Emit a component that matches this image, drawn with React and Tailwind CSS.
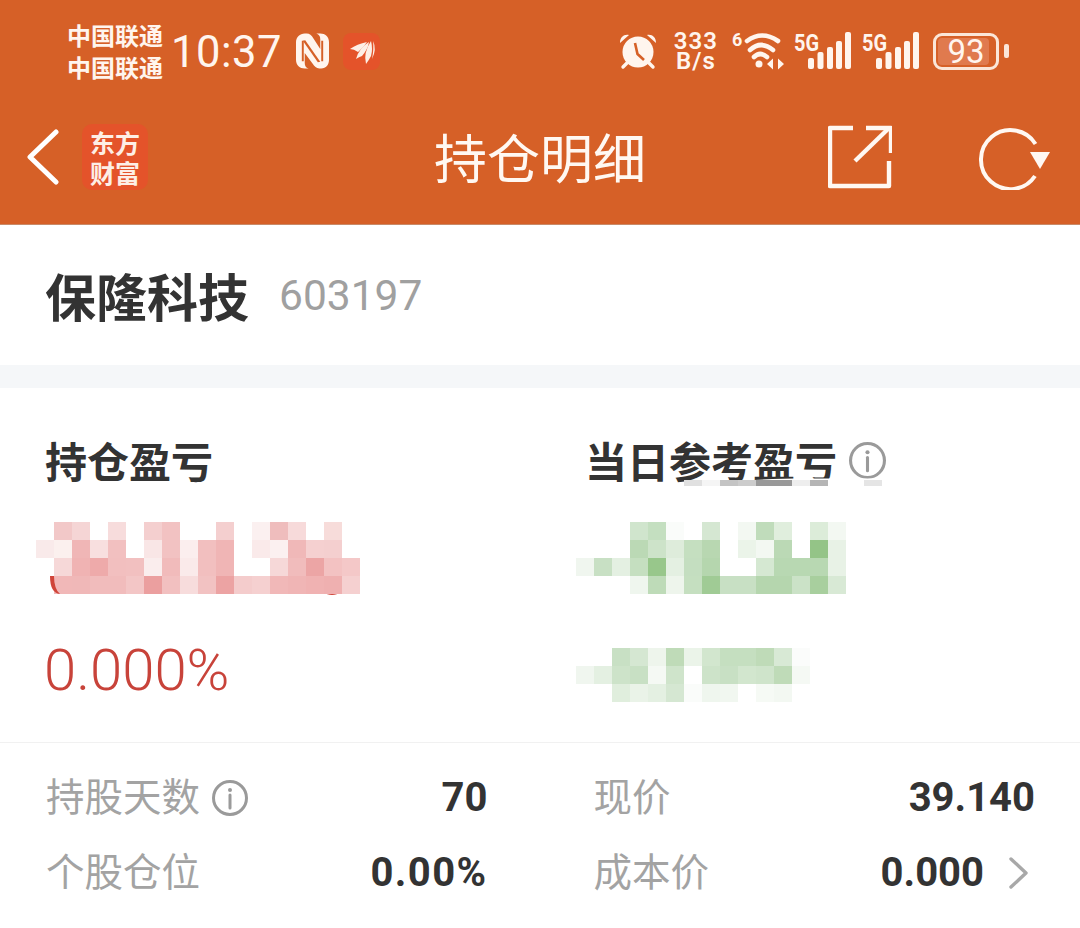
const CJK = { fontFamily: '"Noto Sans CJK SC", sans-serif' };
const ROBOTO = { fontFamily: "Roboto, sans-serif" };

const redRows = [
  ["fff", "f2c8c8", "f5d5d5", "fff", "f7dcdc", "fff", "f4cfcf", "f2c2c2", "fff", "fff", "f4cfcf", "fff", "fbf0f0", "efbdbd", "f7dada", "fff", "f7dcda", "fff"],
  ["f9eaea", "fbf0ee", "f0b6b6", "f8dfdf", "f2c0c0", "fff", "f9e6e6", "f2c2c2", "fbeeee", "f2bfbf", "f0b5b5", "fff", "faeaea", "fbf0f0", "f0b8b8", "f5d0d0", "f4cfcf", "fff"],
  ["fff", "f6d8d8", "f0b3b3", "eeaaaa", "f2bfbf", "f2c0c0", "faeded", "f1bbbb", "faeaea", "f2bfbf", "f0b5b5", "fff", "fff", "f6d8d8", "f1bcbc", "eca5a5", "f3c2c2", "f4c8c8"],
  ["fff", "f1b8b8", "f0b8b8", "f1bcbc", "f1bcbc", "f3c6c6", "eb9f9f", "f2c0c0", "f7dcdc", "f2c2c2", "eca3a3", "f4cccc", "f5d0d0", "f1b8b8", "f0b5b5", "f0b2b2", "efb0b0", "f5d0d0"],
];

const greenRows = [
  ["fff", "fff", "fff", "d0e5cd", "c4dfc0", "fafcfa", "fff", "d5e7d2", "fff", "f3f8f2", "c0dcbb", "e0eedd", "fff", "dcecd9", "f3f8f2"],
  ["fff", "fff", "fff", "bbd9b5", "cde3c9", "deecdb", "c5dfc0", "b8d7b1", "fff", "ebf4e9", "f3f8f2", "bbd9b5", "fff", "94c487", "e8f2e6"],
  ["f0f6ef", "c8e0c4", "e4f0e2", "c5dfc0", "98c78b", "e4f0e2", "c4dec0", "b5d6ae", "fff", "fff", "d5e8d2", "b8d8b2", "b8d8b2", "b8d8b2", "e8f2e6"],
  ["fff", "fff", "fff", "eff6ee", "bedbb8", "eef5ec", "c5dfc0", "a0cb95", "c8e0c4", "c8e0c4", "b5d6ae", "b5d6ae", "cbe2c7", "a8cf9e", "d8e9d5"],
];

const greenRows2 = [
  ["fff", "fff", "c8e0c4", "d5e7d2", "eef5ec", "bfdbb8", "ebf4e9", "d2e6ce", "c5dfc0", "c5dfc0", "bfdbb8", "d8e9d5", "fbfcfb"],
  ["f0f6ef", "e4f0e2", "cde3c9", "c8e0c4", "f5f9f4", "cfe4cb", "fff", "cde3c9", "c8e0c4", "d2e6ce", "cfe4cb", "bfdbb8", "f5f9f4"],
  ["fff", "fff", "e0eedd", "eaf3e8", "e4f0e2", "d5e7d2", "fafcfa", "eff6ee", "f1f7f0", "fff", "f6faf5", "f3f8f2", "fff"],
];

// leftover grey blocks under the heading smear
const greyCells = ["e0e0e0", "f5f5f5", "c4c4c4", "ccc", "999", "999", "eee", "b5b5b5", "fff", "fff", "e5e5e5"];

const Mosaic = ({ rows }) => (
  <div className="flex flex-col">
    {rows.map((row, i) => (
      <div key={i} className="flex">
        {row.map((c, j) => (
          <div key={j} className="w-[18px] h-[18px]" style={{ backgroundColor: `#${c}` }} />
        ))}
      </div>
    ))}
  </div>
);

const InfoIcon = ({ className }) => (
  <svg viewBox="0 0 36 36" className={className} fill="none" stroke="#9a9a9a">
    <circle cx="18" cy="18" r="16.5" strokeWidth="3" />
    <circle cx="18" cy="10" r="2" fill="#9a9a9a" stroke="none" />
    <path d="M18 15v13" strokeWidth="3" strokeLinecap="round" />
  </svg>
);

const NfcIcon = () => (
  <svg viewBox="0 0 34 36" className="w-[33px] h-[36px]">
    <path
      d="M9 0h2c3 0 5 2 7 5l7 11V6c0-3-1-5-4-6h4c5 0 9 3 9 9v18c0 5-3 9-8 9h-2c-3 0-5-2-7-5L9 20v10c0 3 1 5 4 6H9c-5 0-9-3-9-9V9c0-5 4-9 9-9z"
      fill="#fff5ee"
    />
    <path d="M7 7.5l2.5-.5 15.5 22-2.5.5z" fill="#d66027" />
    <path d="M7 7.5v21M27 7.5v21" stroke="#d66027" strokeWidth="2" />
  </svg>
);

const FanLogo = () => (
  <div className="w-[37px] h-[37px] rounded-[8px] bg-[#e4532a]">
    <svg viewBox="0 0 37 37" className="w-[37px] h-[37px]" fill="#fdeee6">
      <path d="M7 16Q14 11 24 9Q21 14 15 19Q11 16 7 16z" />
      <path d="M13 26Q16 15 26 9Q25 16 19 23Q16 24 13 26z" />
      <path d="M23 31Q20 20 28 8Q30 16 28 23Q26 27 23 31z" />
      <path d="M30 8Q34 16 29 26Q31 16 30 8z" />
    </svg>
  </div>
);

const SignalIcon = ({ className }) => (
  <div className={`relative w-[58px] h-[40px] ${className}`}>
    <svg viewBox="0 0 58 40" className="w-[58px] h-[40px]" fill="#fff5ee">
      <rect x="14" y="27" width="6" height="11" rx="2" />
      <rect x="23.5" y="21" width="6" height="17" rx="2" />
      <rect x="33" y="16" width="6" height="22" rx="2" />
      <rect x="42" y="10" width="6" height="28" rx="2" />
      <rect x="51" y="1" width="6" height="37" rx="2" />
    </svg>
    <span className="absolute left-0 top-0 text-[24px] leading-[24px] font-bold text-[#fff5ee] scale-x-[0.83] origin-left" style={ROBOTO}>5G</span>
  </div>
);

const StatusIcons = () => (
  <div className="flex items-center">
    {/* alarm */}
    <svg viewBox="0 0 40 38" className="w-[40px] h-[38px]">
      <circle cx="19" cy="20" r="15.5" fill="#fff5ee" />
      <path d="M1 11C1 5 5 2 10 3zM37 11c0-6-4-9-9-8z" fill="#fff5ee" />
      <path d="M8 31l-4 4M30 31l4 4" stroke="#fff5ee" strokeWidth="3.4" strokeLinecap="round" />
      <path d="M16 11l2.5 11 6.5 6" stroke="#d66027" strokeWidth="2.6" fill="none" />
    </svg>
    {/* speed */}
    <div className="ml-[15px] flex flex-col items-center text-[#fff5ee] font-semibold text-[24px] tracking-[1px]" style={ROBOTO}>
      <span className="h-[21px] leading-[21px]">333</span>
      <span className="h-[19px] leading-[19px]">B/s</span>
    </div>
    {/* wifi */}
    <div className="relative w-[54px] h-[40px] ml-[13px]">
      <svg viewBox="0 0 54 40" className="w-[54px] h-[40px]" fill="none" stroke="#fff5ee" strokeLinecap="round">
        <path d="M16 10Q31 -1 47 10" strokeWidth="4.6" />
        <path d="M19 19Q30 9 42 19" strokeWidth="4.6" />
        <path d="M23 26Q29 20 36 26" strokeWidth="4.6" />
        <circle cx="28" cy="33" r="3.5" fill="#fff5ee" stroke="none" />
        <path d="M36 33l6-5.5v11zM47 27.5l6 5.5-6 5.5z" fill="#fff5ee" stroke="none" />
      </svg>
      <span className="absolute left-[1px] top-0 text-[18px] leading-[18px] font-bold text-[#fff5ee]" style={ROBOTO}>6</span>
    </div>
    <SignalIcon className="ml-[9px]" />
    <SignalIcon className="ml-[10px]" />
    {/* battery */}
    <div className="ml-[13px] flex items-center">
      <div className="relative w-[66px] h-[37px] rounded-[9px] border-[3px] border-[#fbe6d8]">
        <div className="absolute inset-y-[2px] left-[2px] right-[7px] rounded-[4px] bg-[#e07a4e]" />
        <span className="absolute inset-0 flex items-center justify-center text-[33px] text-[#fff5ee] leading-none" style={ROBOTO}>
          93
        </span>
      </div>
      <div className="ml-[5px] w-[5px] h-[14px] rounded-[2px] bg-[#fbe6d8]" />
    </div>
  </div>
);

const Stat = ({ label, value, info, chevron, valueClass = "" }) => (
  <div className="flex items-center h-[75px]">
    <span className="-mt-[6px] text-[38.5px] text-[#a3a3a3] leading-none" style={CJK}>{label}</span>
    {info && <InfoIcon className="w-[36px] h-[36px] ml-[12px]" />}
    <span className={`ml-auto text-[40px] font-bold text-[#333] leading-none ${valueClass}`} style={ROBOTO}>{value}</span>
    {chevron && (
      <svg viewBox="0 0 20 32" className="w-[20px] h-[32px] ml-[24px] mr-[7px]" fill="none" stroke="#a8a8a8" strokeWidth="3.4" strokeLinecap="round" strokeLinejoin="round">
        <path d="M3 2l15 14L3 30" />
      </svg>
    )}
  </div>
);

export default function App() {
  return (
    <div className="w-[1080px] h-[928px] bg-white overflow-hidden">
      {/* Header */}
      <header className="h-[225px] bg-[#d66027] border-b border-[#c98a68] flex flex-col">
        <div className="h-[104px] flex items-start pt-[19px] pl-[67px] pr-[71px]">
          <div className="flex flex-col text-[24px] font-bold leading-[32px] text-[#fff5ee] w-[96px]" style={CJK}>
            <span className="whitespace-nowrap">中国联通</span>
            <span className="whitespace-nowrap">中国联通</span>
          </div>
          <div className="ml-[8px] mt-[12px] flex items-center h-[40px]">
            <span className="mt-[3px] text-[43.5px] leading-[40px] tracking-[0.5px] text-[#fff5ee]" style={ROBOTO}>10:37</span>
            <div className="ml-[14px]"><NfcIcon /></div>
            <div className="ml-[14px]"><FanLogo /></div>
          </div>
          <div className="ml-auto mt-[12px]">
            <StatusIcons />
          </div>
        </div>

        <div className="relative flex-1 flex items-center pb-[14px] pl-[26px] pr-[29px]">
          <svg viewBox="0 0 34 56" className="w-[34px] h-[56px]" fill="none" stroke="#fff" strokeWidth="5" strokeLinecap="round" strokeLinejoin="round">
            <path d="M30 3L4 28l26 25" />
          </svg>
          <div className="ml-[22px] w-[66px] h-[66px] rounded-[10px] bg-[#e4532a] flex flex-col items-center justify-center text-[25px] font-bold text-[#fdeee6]" style={CJK}>
            <span className="h-[30px] leading-[30px]">东方</span>
            <span className="h-[30px] leading-[30px]">财富</span>
          </div>
          <h1 className="absolute inset-x-0 -mt-[2px] text-center text-[53px] text-[#fff8f2] leading-none" style={CJK}>持仓明细</h1>
          <svg viewBox="0 0 64 64" className="ml-auto w-[64px] h-[64px]" fill="none" stroke="#fff8f2" strokeWidth="4.4" strokeLinejoin="round">
            <path d="M25 3H2v58h59V36" />
            <path d="M27 36L60 4" />
            <path d="M38 3h25v25" />
          </svg>
          <svg viewBox="0 0 74 66" className="ml-[85px] w-[74px] h-[66px]" fill="none" stroke="#fff8f2" strokeWidth="4">
            <path d="M58 52A29.5 29.5 0 1 1 58.5 20" />
            <path d="M53 28H73L63 45z" fill="#fff8f2" stroke="none" />
          </svg>
        </div>
      </header>

      {/* Stock name */}
      <div className="h-[140px] flex items-center pl-[45px]">
        <span className="text-[51px] font-bold text-[#333] leading-none" style={CJK}>保隆科技</span>
        <span className="ml-[30px] mt-[2px] text-[42.5px] text-[#a0a0a0] leading-none" style={ROBOTO}>603197</span>
      </div>
      <div className="h-[23px] bg-[#f5f7f9]" />

      {/* P&L */}
      <section className="relative h-[355px] border-b border-[#f1f1f1] flex">
        <div className="w-[540px] flex flex-col pl-[45px]">
          <h2 className="mt-[47px] text-[42px] leading-[50px] font-bold text-[#333]" style={CJK}>持仓盈亏</h2>
          <div className="relative -ml-[9px] mt-[37px] h-[72px] w-fit">
            <div className="absolute left-[284px] top-[56px] w-[24px] h-[17px] rounded-b-full bg-[#d0453a]" />
            <div className="relative">
              <Mosaic rows={redRows} />
            </div>
            <svg viewBox="0 0 10 18" className="absolute left-[14px] top-[54px] w-[10px] h-[18px]">
              <path d="M0 0H4Q4 13 10 18Q0 17 0 0z" fill="#d0453a" />
            </svg>
          </div>
          <span className="-ml-[1px] mt-[47px] text-[58px] leading-none font-light text-[#c8433a]" style={ROBOTO}>0.000%</span>
        </div>
        <div className="flex-1 flex flex-col pl-[45px]">
          <div className="mt-[47px] flex items-center h-[50px] w-fit">
            <h2 className="text-[42px] leading-[50px] font-bold text-[#333]" style={CJK}>当日参考盈亏</h2>
            <InfoIcon className="w-[37px] h-[37px] ml-[12px]" />
          </div>
          <div className="-ml-[9px] mt-[37px]">
            <Mosaic rows={greenRows} />
          </div>
          <div className="-ml-[9px] mt-[54px]">
            <Mosaic rows={greenRows2} />
          </div>
        </div>
        {/* white smear over the heading */}
        <svg viewBox="0 0 400 40" className="absolute left-[630px] top-[87px] w-[260px] h-[28px]">
          <path d="M0 40C60 18 150 4 270 4c40 0 80 0 130 0v36z" fill="#fff" />
        </svg>
        <div className="absolute left-[684px] top-[92px] flex">
          {greyCells.map((c, i) => (
            <div key={i} className="w-[18px] h-[6px]" style={{ backgroundColor: `#${c}` }} />
          ))}
        </div>
      </section>

      {/* Stats */}
      <div className="grid grid-cols-2 gap-x-[106px] pl-[46px] pr-[45px] pt-[17px]">
        <div className="flex flex-col">
          <Stat label="持股天数" value="70" info />
          <Stat label="个股仓位" value="0.00%" valueClass="tracking-[1.4px]" />
        </div>
        <div className="flex flex-col">
          <Stat label="现价" value="39.140" />
          <Stat label="成本价" value="0.000" chevron />
        </div>
      </div>
    </div>
  );
}
